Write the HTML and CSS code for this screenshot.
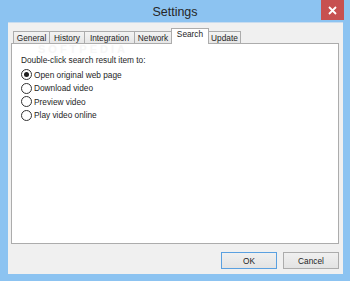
FILE: index.html
```html
<!DOCTYPE html>
<html lang="en">
<head>
<meta charset="UTF-8">
<title>Settings</title>
<link rel="stylesheet" href="styles.css">
</head>
<body>
    <div class="window">
        <div class="titlebar">
            <span class="title">Settings</span>
            <div class="close-btn">
                <svg width="9" height="9" viewBox="0 0 9 9">
                    <path d="M1 1 L8 8 M8 1 L1 8" stroke="#fff" stroke-width="1.8"/>
                </svg>
            </div>
        </div>

        <div class="client">
            <div class="tabs">
                <div class="tab">General</div>
                <div class="tab">History</div>
                <div class="tab">Integration</div>
                <div class="tab">Network</div>
                <div class="tab active">Search</div>
                <div class="tab">Update</div>
            </div>
            <div class="panel">
                <div class="watermark">SOFTPEDIA</div>
                <p class="label">Double-click search result item to:</p>
                <label class="radio"><span class="dot checked"></span>Open original web page</label>
                <label class="radio"><span class="dot"></span>Download video</label>
                <label class="radio"><span class="dot"></span>Preview video</label>
                <label class="radio"><span class="dot"></span>Play video online</label>
            </div>
            <div class="button-row">
                <button class="btn default">OK</button>
                <button class="btn">Cancel</button>
            </div>
        </div>
    </div>
</body>
</html>
```

FILE: styles.css
```css
body {
    margin: 0;
    padding: 0;
    font-family: 'Liberation Sans', Arial, sans-serif;
    font-size: 8.3px;
    color: #1e1e1e;
    background-color: #8cc3f1;
}

.window {
    width: 350px;
    height: 281px;
    display: flex;
    flex-direction: column;
}

.titlebar {
    position: relative;
    height: 24px;
    display: flex;
    align-items: center;
    justify-content: center;
}
.title {
    font-size: 12.5px;
    color: #262626;
    margin-top: 2px;
}
.close-btn {
    position: absolute;
    top: 0;
    right: 6px;
    width: 23px;
    height: 20px;
    background-color: #c75050;
    display: flex;
    align-items: center;
    justify-content: center;
}

.client {
    flex: 1;
    margin: 0 7px 7px 8px;
    padding: 5px 4px 5px 3px;
    background-color: #f0f0f0;
    border-top: 1px solid #c8dcef;
    display: flex;
    flex-direction: column;
}

.tabs {
    display: flex;
    align-items: flex-end;
    height: 15px;
    padding-left: 2px;
    position: relative;
    z-index: 1;
}
.tab {
    height: 12px;
    line-height: 12px;
    text-align: center;
    border: 1px solid #acacac;
    border-bottom: none;
    margin-right: -1px;
    background: linear-gradient(#f3f3f3, #e6e6e6);
    box-sizing: border-box;
    white-space: nowrap;
}
.tab:nth-child(1) { width: 37px; }
.tab:nth-child(2) { width: 36px; }
.tab:nth-child(3) { width: 51px; }
.tab:nth-child(4) { width: 38px; }
.tab:nth-child(5) { width: 38px; }
.tab:nth-child(6) { width: 33px; }

.tab.active {
    height: 16px;
    line-height: 11px;
    margin-bottom: -1px;
    background: #fff;
}

.panel {
    position: relative;
    height: 201px;
    background-color: #fff;
    border: 1px solid #acacac;
    box-sizing: border-box;
    padding: 9px 9px;
}

.watermark {
    position: absolute;
    left: 26px;
    top: 0;
    font-size: 11px;
    line-height: 10px;
    letter-spacing: 3px;
    color: #f6f6f6;
    font-weight: bold;
}

.label {
    margin: 2px 0 3px 0;
    position: relative;
}

.radio {
    display: flex;
    align-items: center;
    height: 13.5px;
    position: relative;
}
.dot {
    width: 9px;
    height: 9px;
    border: 1px solid #333;
    border-radius: 50%;
    margin-right: 2px;
    display: flex;
    align-items: center;
    justify-content: center;
    background: #fff;
}
.dot.checked::after {
    content: "";
    width: 5px;
    height: 5px;
    border-radius: 50%;
    background-color: #1e1e1e;
}

.button-row {
    display: flex;
    justify-content: flex-end;
    gap: 6px;
    margin-top: 8px;
}
.btn {
    width: 56px;
    height: 17px;
    padding: 0;
    font-family: 'Liberation Sans', Arial, sans-serif;
    font-size: 8.3px;
    color: #1e1e1e;
    background: linear-gradient(#f0f0f0, #e3e3e3);
    border: 1px solid #acacac;
}
.btn.default {
    border-color: #5aa0e0;
}
```
